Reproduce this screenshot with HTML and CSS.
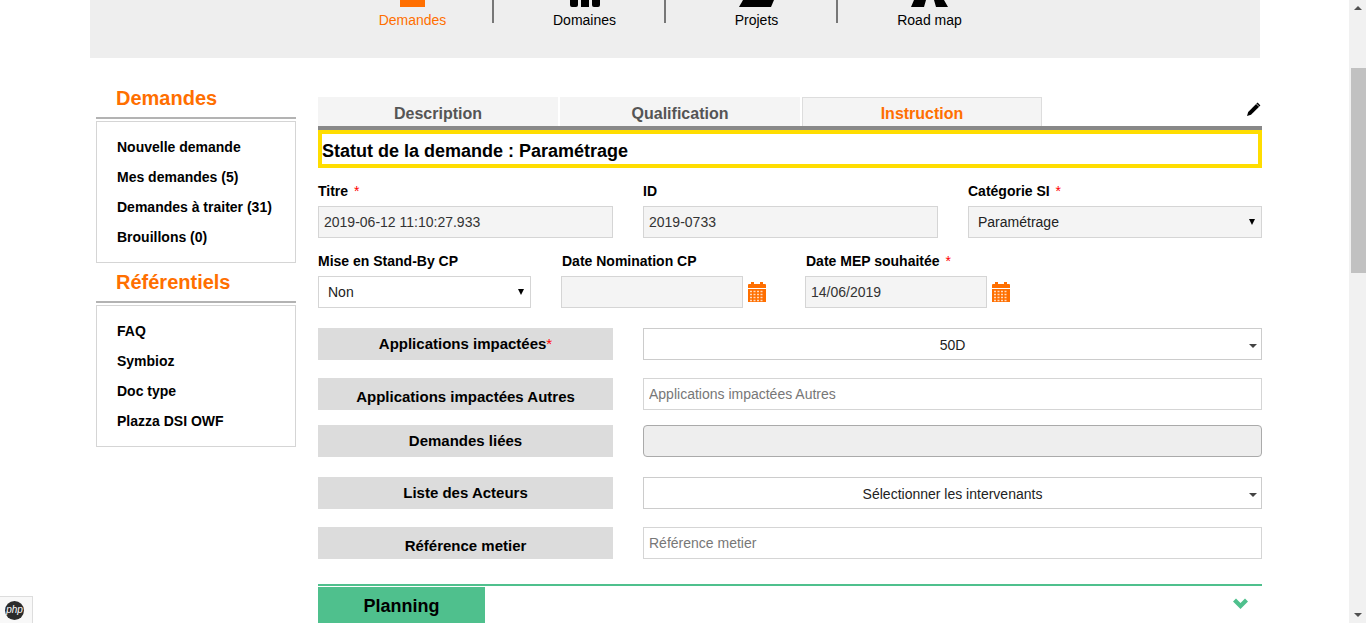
FILE: index.html
```html
<!DOCTYPE html>
<html lang="fr">
<head>
  <meta charset="UTF-8">
  <meta name="viewport" content="width=device-width, initial-scale=1.0">
  <title>Demandes</title>
  <link rel="stylesheet" href="styles.css">
</head>
<body>
  <div class="page">
    <nav class="topnav">
      <a class="nav-item active">
        <span class="nav-icon"><svg width="25" height="7"><rect width="25" height="7" fill="#ff6f00"/></svg></span>
        <span class="nav-label">Demandes</span>
      </a>
      <a class="nav-item">
        <span class="nav-icon"><svg width="30" height="7"><path d="M0 0h8v5q0 2-2 2H2q-2 0-2-2zM11 0h8v7h-8zM22 0h8v5q0 2-2 2h-4q-2 0-2-2z" fill="#000"/></svg></span>
        <span class="nav-label">Domaines</span>
      </a>
      <a class="nav-item">
        <span class="nav-icon"><svg width="35" height="7"><path d="M4 0h31l-3 7H0z" fill="#000"/></svg></span>
        <span class="nav-label">Projets</span>
      </a>
      <a class="nav-item last">
        <span class="nav-icon"><svg width="37" height="7"><path d="M3 0h12l-2 7H0zM23 0h10l4 7H25z" fill="#000"/></svg></span>
        <span class="nav-label">Road map</span>
      </a>
    </nav>

    <div class="layout">
      <aside class="sidebar">
        <h3 class="side-title">Demandes</h3>
        <ul class="side-box">
          <li>Nouvelle demande</li>
          <li>Mes demandes (5)</li>
          <li>Demandes à traiter (31)</li>
          <li>Brouillons (0)</li>
        </ul>
        <h3 class="side-title second">Référentiels</h3>
        <ul class="side-box">
          <li>FAQ</li>
          <li>Symbioz</li>
          <li>Doc type</li>
          <li>Plazza DSI OWF</li>
        </ul>
      </aside>

      <main class="content">
        <div class="tabs">
          <div class="tab">Description</div>
          <div class="tab">Qualification</div>
          <div class="tab current">Instruction</div>
          <svg class="edit-icon" width="16" height="16" viewBox="0 0 16 16"><path d="M11.6 1.6l2.8 2.8L5 13.8 1 15l1.2-4z" fill="#000"/><path d="M10.4 2.9l2.8 2.8" stroke="#fff" stroke-width="0.8"/></svg>
        </div>
        <div class="status">Statut de la demande : Paramétrage</div>

        <div class="fields three">
          <div class="field">
            <label>Titre <b class="req">*</b></label>
            <input class="grey" type="text" value="2019-06-12 11:10:27.933" readonly>
          </div>
          <div class="field">
            <label>ID</label>
            <input class="grey" type="text" value="2019-0733" readonly>
          </div>
          <div class="field">
            <label>Catégorie SI <b class="req">*</b></label>
            <div class="select-wrap">
              <select class="grey"><option>Paramétrage</option></select>
            </div>
          </div>
        </div>

        <div class="fields dates">
          <div class="field standby">
            <label>Mise en Stand-By CP</label>
            <div class="select-wrap">
              <select><option>Non</option></select>
            </div>
          </div>
          <div class="field date-field">
            <label>Date Nomination CP</label>
            <div class="date-line">
              <input class="grey" type="text" readonly>
              <svg width="20" height="20" viewBox="0 0 20 20"><use href="#calendar"/></svg>
            </div>
          </div>
          <div class="field date-field">
            <label>Date MEP souhaitée <b class="req">*</b></label>
            <div class="date-line">
              <input class="grey" type="text" value="14/06/2019" readonly>
              <svg width="20" height="20" viewBox="0 0 20 20"><use href="#calendar"/></svg>
            </div>
          </div>
        </div>

        <div class="wide-row gap20">
          <div class="wide-label">Applications impactées<b class="req tight">*</b></div>
          <div class="select-wrap flat">
            <select class="centered"><option>50D</option></select>
          </div>
        </div>
        <div class="wide-row gap18">
          <div class="wide-label down">Applications impactées Autres</div>
          <input type="text" placeholder="Applications impactées Autres">
        </div>
        <div class="wide-row gap15">
          <div class="wide-label">Demandes liées</div>
          <div class="linked"></div>
        </div>
        <div class="wide-row gap20">
          <div class="wide-label">Liste des Acteurs</div>
          <div class="select-wrap flat">
            <select class="centered"><option>Sélectionner les intervenants</option></select>
          </div>
        </div>
        <div class="wide-row gap18">
          <div class="wide-label down">Référence metier</div>
          <input type="text" placeholder="Référence metier">
        </div>

        <div class="section-head">
          <div class="section-tab">Planning</div>
          <svg class="chevron" width="15" height="11" viewBox="0 0 15 11"><path d="M0 3.500L3 .5l4.500 4.500L12 .5l3 3L7.500 11z" fill="#4fc08d"/></svg>
        </div>
      </main>
    </div>
  </div>

  <div class="scrollbar">
    <span class="arrow-up"></span>
    <div class="thumb"></div>
    <span class="arrow-down"></span>
  </div>

  <div class="php-badge"><span class="php-logo">php</span></div>

  <svg width="0" height="0" class="defs">
    <symbol id="calendar" viewBox="0 0 20 20">
      <path d="M2 2h2V0h3v2h6V0h3v2h2a1 1 0 0 1 1 1v3H1V3a1 1 0 0 1 1-1z" fill="#ff6f00"/>
      <path d="M1 7h18v13H1z" fill="#ff6f00"/>
      <path d="M3 9.5h14M3 12.500h14M3 15.500h14M3 18.500h14" stroke="#ffd9bd" stroke-width="1.600" stroke-dasharray="2 1.500"/>
    </symbol>
  </svg>
</body>
</html>
```

FILE: styles.css
```css
* {
  box-sizing: border-box;
}

html, body {
  height: 100%;
}

body {
  margin: 0;
  display: flex;
  overflow: hidden;
  font-family: "Liberation Sans", Arial, sans-serif;
  font-size: 14px;
  color: #000;
  background: #fff;
}

.page {
  flex: 1;
  padding-left: 90px;
  overflow: hidden;
}

/* top menu */
.topnav {
  width: 1170px;
  height: 58px;
  padding-left: 232px;
  display: flex;
  align-items: flex-start;
  background: #eee;
}
.nav-item {
  width: 172px;
  height: 23px;
  padding-left: 11px;
  border-right: 2px solid #777;
  display: flex;
  flex-direction: column;
  align-items: center;
  white-space: nowrap;
}
.nav-item.last {
  border-right: none;
}
.nav-item.active {
  color: #ff6f00;
}
.nav-icon {
  height: 7px;
  display: block;
  line-height: 0;
}
.nav-label {
  margin-top: 5px;
  line-height: 16px;
}

.layout {
  display: flex;
}

/* left column */
.sidebar {
  width: 200px;
  margin-left: 6px;
  padding-top: 29px;
}
.side-title {
  margin: 0;
  height: 32px;
  padding-left: 20px;
  font-size: 20px;
  line-height: 23px;
  color: #ff6f00;
  border-bottom: 2px solid #b3b3b3;
}
.side-title.second {
  margin-top: 8px;
}
.side-box {
  list-style: none;
  margin: 2px 0 0;
  padding: 10px 20px;
  border: 1px solid #d5d5d5;
}
.side-box li {
  height: 30px;
  line-height: 30px;
  font-weight: bold;
  white-space: nowrap;
}

/* main column */
.content {
  width: 944px;
  margin-left: 22px;
  padding-top: 39px;
}
.tabs {
  display: flex;
  gap: 2px;
  height: 33px;
  border-bottom: 4px solid #888;
}
.tab {
  width: 240px;
  text-align: center;
  font-size: 16px;
  font-weight: bold;
  line-height: 33px;
  color: #555;
  background: #f4f4f4;
}
.tab.current {
  color: #ff6f00;
  border: 1px solid #ddd;
  border-bottom: none;
  line-height: 31px;
}
.edit-icon {
  margin: 4px 0 0 auto;
}
.status {
  height: 38px;
  border: 4px solid #ffdd00;
  font-size: 18px;
  font-weight: bold;
  line-height: 34px;
}

.fields {
  display: flex;
  margin-top: 15px;
}
.field label {
  display: block;
  height: 16px;
  margin-bottom: 7px;
  font-weight: bold;
  line-height: 16px;
  white-space: nowrap;
}
.date-field label {
  padding-left: 1px;
}
.req {
  color: #f00;
  font-weight: normal;
  margin-left: 2px;
}
.req.tight {
  margin-left: 0;
}
.three {
  gap: 30px;
}
.three .field {
  width: 295px;
}
.three .field:last-child {
  width: 294px;
}
.standby {
  width: 213px;
  margin-right: 30px;
}
.date-field {
  width: 244px;
}
.date-line {
  display: flex;
  align-items: center;
  gap: 4px;
}
.date-line input {
  width: 182px;
}
.defs {
  position: absolute;
}

input, select, .linked {
  width: 100%;
  height: 32px;
  padding: 0 5px;
  border: 1px solid #d5d5d5;
  border-radius: 0;
  background: #fff;
  font-family: inherit;
  font-size: 14px;
  color: #333;
  outline: none;
}
input::placeholder {
  color: #777;
  opacity: 1;
}
select {
  display: block;
  padding-left: 9px;
  appearance: none;
  -webkit-appearance: none;
  color: #222;
}
.grey {
  background: #f4f4f4;
}

.select-wrap {
  position: relative;
}
.select-wrap::after {
  content: "";
  position: absolute;
  right: 7px;
  top: 13px;
  border-style: solid;
  border-width: 6px 3px 0;
  border-color: #000 transparent transparent;
}
.select-wrap.flat::after {
  right: 5px;
  top: 16px;
  border-width: 4px 4px 0;
  border-color: #444 transparent transparent;
}
.centered {
  padding: 2px 9px 0 9px;
  text-align: center;
  text-align-last: center;
  border-color: #ccc;
}

/* label + control rows */
.wide-row {
  display: grid;
  grid-template-columns: 295px 1fr;
  column-gap: 30px;
  height: 32px;
}
.gap15 {
  margin-top: 15px;
}
.gap18 {
  margin-top: 18px;
}
.gap20 {
  margin-top: 20px;
}
.wide-label {
  height: 32px;
  text-align: center;
  font-size: 15px;
  font-weight: bold;
  line-height: 31px;
  background: #dcdcdc;
  white-space: nowrap;
}
.wide-label.down {
  line-height: 37px;
}
.linked {
  background: #eee;
  border-color: #aaa;
  border-radius: 4px;
}

/* collapsible section */
.section-head {
  display: flex;
  margin-top: 25px;
  height: 40px;
  padding-top: 1px;
  border-top: 2px solid #4fc08d;
}
.section-tab {
  width: 167px;
  height: 37px;
  text-align: center;
  font-size: 18px;
  font-weight: bold;
  line-height: 38px;
  background: #4fc08d;
}
.chevron {
  margin: 11px 14px 0 auto;
}

/* browser scrollbar */
.scrollbar {
  width: 17px;
  flex: none;
  display: flex;
  flex-direction: column;
  align-items: center;
  background: #f1f1f1;
}
.arrow-up, .arrow-down {
  display: block;
  border-style: solid;
  border-color: transparent;
}
.arrow-up {
  margin-top: 6px;
  border-width: 0 4px 4px;
  border-bottom-color: #505050;
}
.arrow-down {
  margin-top: auto;
  margin-bottom: 6px;
  border-width: 4px 4px 0;
  border-top-color: #505050;
}
.thumb {
  width: 15px;
  height: 205px;
  margin: 58px 0 0 2px;
  background: #c1c1c1;
}

/* badge over the corner */
.php-badge {
  position: fixed;
  left: 0;
  bottom: 0;
  width: 33px;
  height: 27px;
  display: flex;
  align-items: center;
  padding-left: 5px;
  background: #f8f8f8;
  border: 1px solid #ddd;
  border-left: none;
  border-bottom: none;
}
.php-logo {
  width: 19px;
  height: 19px;
  border-radius: 50%;
  background: #2b2b2b;
  color: #fff;
  font-size: 10px;
  font-style: italic;
  line-height: 18px;
  text-align: center;
}
```
